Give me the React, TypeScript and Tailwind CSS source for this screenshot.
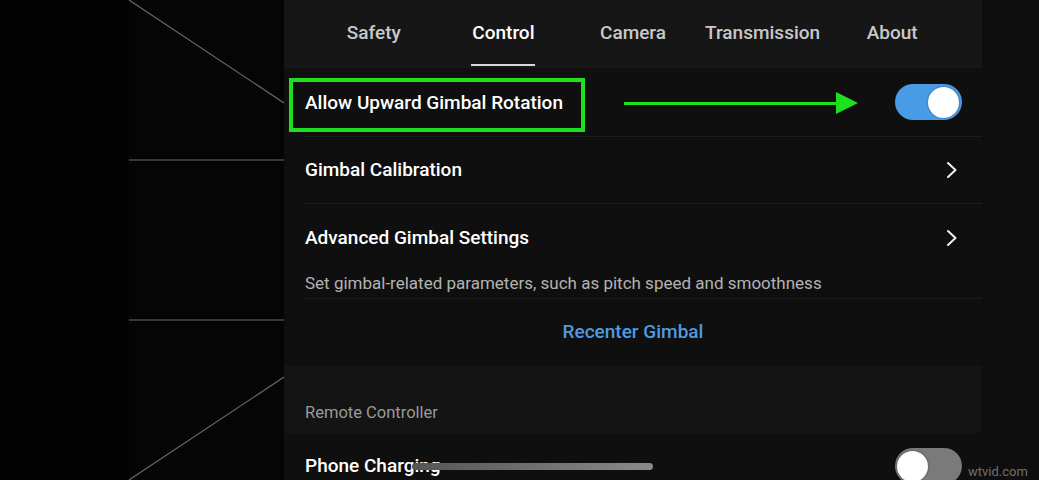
const tabs = ['Safety', 'Control', 'Camera', 'Transmission', 'About'];

function Toggle({ on }: { on: boolean }) {
  return (
    <div
      className={
        on
          ? 'w-[67px] h-[36px] rounded-full bg-[#4a9be6] flex items-center justify-end px-[3px]'
          : 'w-[67px] h-[36px] rounded-full bg-[#7a7a7a] flex items-center justify-start px-[2px]'
      }
    >
      <div className="w-[31px] h-[31px] rounded-full bg-white shadow-[0_0_2px_rgba(0,0,0,0.5)]" />
    </div>
  );
}

function Chevron() {
  return (
    <svg width="12" height="18" viewBox="0 0 12 18">
      <polyline points="2,2 9.5,9 2,16" fill="none" stroke="#f2f2f2" strokeWidth="2" strokeLinecap="round" strokeLinejoin="round" />
    </svg>
  );
}

function Divider() {
  return <div className="ml-[20px] h-px bg-[#1d1d1d]" />;
}

export default function App() {
  return (
    <div
      className="relative flex h-[480px] w-[1039px] overflow-hidden bg-[#030303] text-white"
      style={{ fontFamily: 'Roboto, "Noto Sans", sans-serif' }}
    >
      <div className="w-[129px] shrink-0 bg-[#020202]" />

      {/* camera view guide lines */}
      <div className="w-[155px] shrink-0 bg-[#050505]">
        <svg width="155" height="480" viewBox="0 0 155 480">
          <line x1="0" y1="0" x2="155" y2="103" stroke="#6a6a6a" strokeWidth="1.2" />
          <line x1="0" y1="160" x2="155" y2="160" stroke="#6a6a6a" strokeWidth="1.2" />
          <line x1="0" y1="320" x2="155" y2="320" stroke="#6a6a6a" strokeWidth="1.2" />
          <line x1="155" y1="377" x2="0" y2="480" stroke="#6a6a6a" strokeWidth="1.2" />
        </svg>
      </div>

      <div className="relative flex w-[698px] shrink-0 flex-col overflow-hidden bg-[#0f0f0f] [&>*]:shrink-0">
        <div className="grid h-[68px] grid-cols-5 border-b border-[#1a1a1a] bg-[#161616] px-[25px]">
          {tabs.map((t) => (
            <div key={t} className="relative flex items-center justify-center pb-[1px]">
              <span
                className={
                  t === 'Control'
                    ? 'text-[19px] font-medium text-white'
                    : 'text-[19px] font-medium text-[#c9c9c9]'
                }
              >
                {t}
              </span>
              {t === 'Control' && (
                <div className="absolute bottom-[1px] left-1/2 h-[2px] w-[64px] -translate-x-1/2 bg-[#d8d8d8]" />
              )}
            </div>
          ))}
        </div>

        <div className="flex h-[68px] items-center justify-between pl-[21px] pr-[20px]">
          <span className="pt-[3px] text-[19px] font-medium">Allow Upward Gimbal Rotation</span>
          <Toggle on />
        </div>
        <Divider />

        <div className="flex h-[66px] items-center justify-between pl-[21px] pr-[24px]">
          <span className="text-[19px] font-medium">Gimbal Calibration</span>
          <Chevron />
        </div>
        <Divider />

        <div className="flex h-[66px] items-center justify-between pl-[21px] pr-[24px] pt-[2px]">
          <span className="text-[19px] font-medium">Advanced Gimbal Settings</span>
          <Chevron />
        </div>
        <div className="pl-[21px] pb-[2px] text-[17px] leading-[26px] text-[#b3b3b3]">
          Set gimbal-related parameters, such as pitch speed and smoothness
        </div>
        <Divider />

        <div className="flex h-[67px] items-center justify-center">
          <span className="text-[19px] font-medium text-[#4f9ae0]">Recenter Gimbal</span>
        </div>

        <div className="flex h-[67px] items-end bg-[#141414] pb-[7px] pl-[21px]">
          <span className="text-[16.5px] text-[#9a9a9a]">Remote Controller</span>
        </div>

        <div className="flex h-[68px] items-start justify-between pl-[21px] pr-[20px] pt-[15px]">
          <span className="pt-[4px] text-[19px] font-medium">Phone Charging</span>
          <Toggle on={false} />
        </div>

        {/* annotation overlay */}
        <div className="absolute left-[5px] top-[78px] h-[54px] w-[296px] border-[4px] border-[#1fe01f]" />
        <div className="absolute left-[340px] top-[92px] flex items-center">
          <div className="h-[3px] w-[212px] bg-[#1fe01f]" />
          <div className="h-0 w-0 border-y-[11px] border-l-[22px] border-y-transparent border-l-[#1fe01f]" />
        </div>
      </div>

      <div className="w-[57px] shrink-0 bg-[#0e0e0e]" />

      {/* home indicator */}
      <div className="absolute left-[412px] top-[463px] h-[7px] w-[241px] rounded-full bg-gradient-to-r from-[#555] to-[#8a8a8a]" />
      <span className="absolute left-[968px] top-[462px] text-[13px] text-[#707070]">wtvid.com</span>
    </div>
  );
}
